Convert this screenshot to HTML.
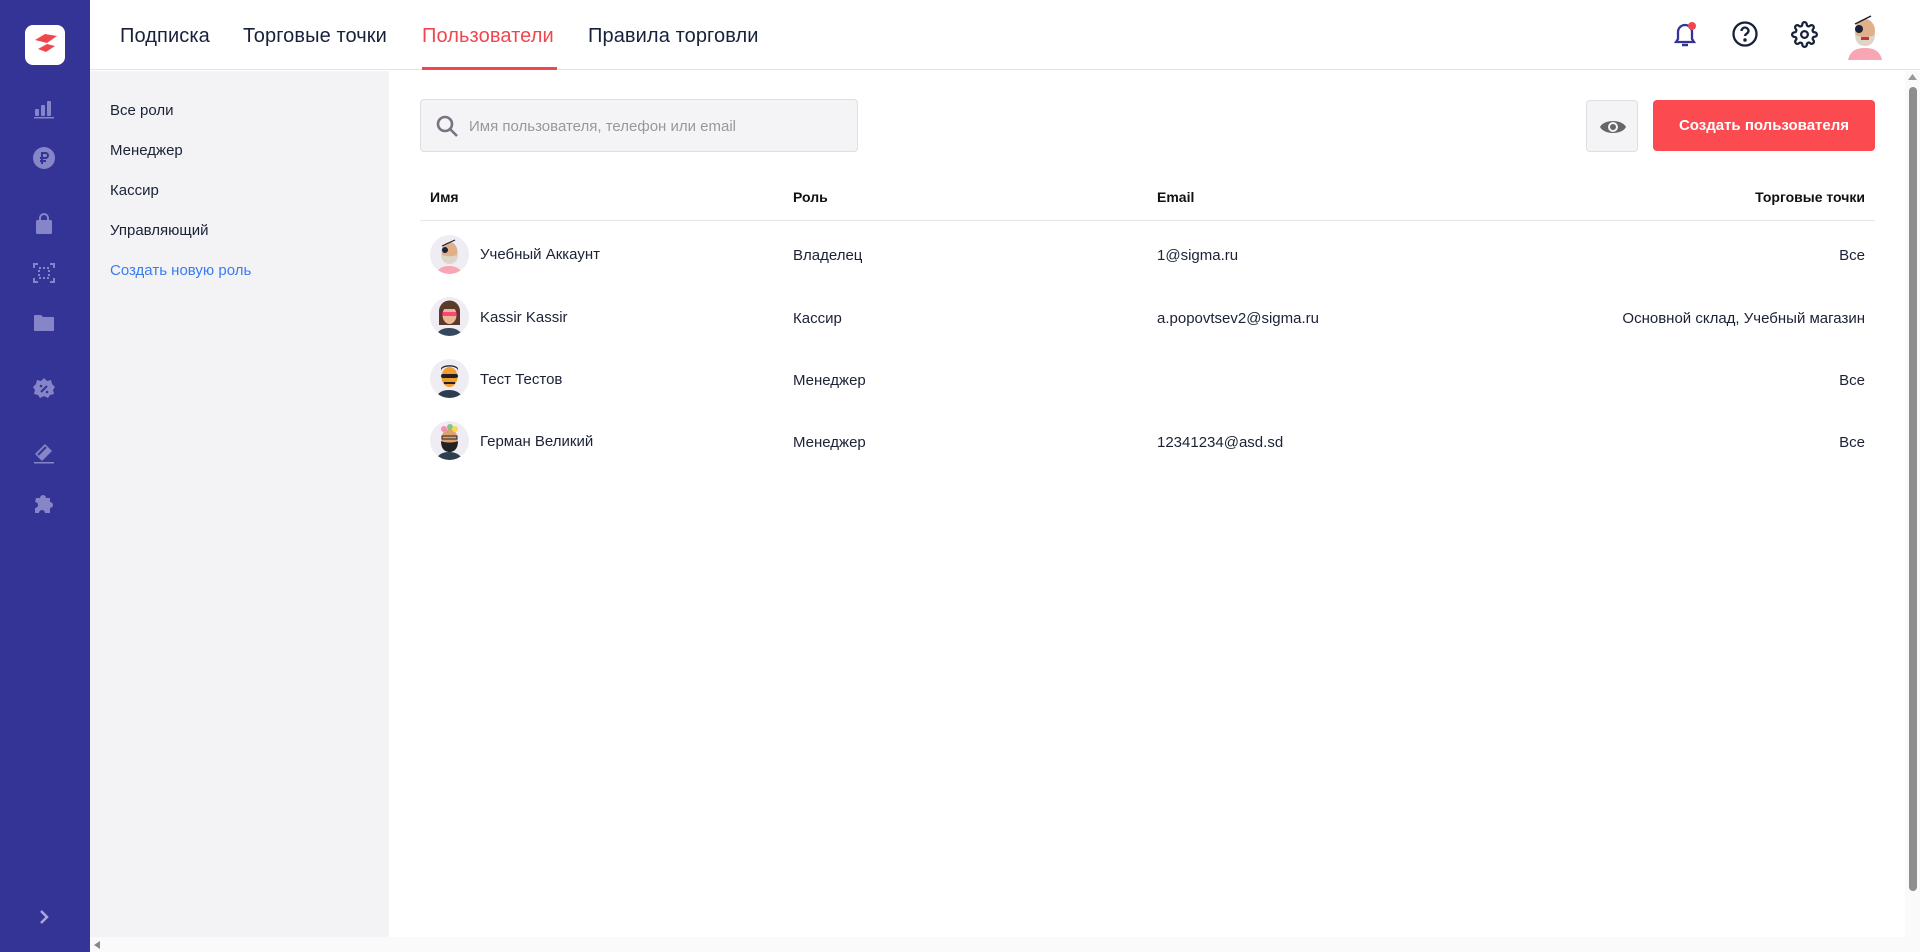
<!DOCTYPE html>
<html><head><meta charset="utf-8"><style>
*{box-sizing:border-box;margin:0;padding:0}
body{width:1920px;height:952px;overflow:hidden;font-family:"Liberation Sans","DejaVu Sans",sans-serif;color:#1b2235;background:#fff;position:relative}
.side{position:absolute;left:0;top:0;width:90px;height:952px;background:#343396}
.logo{position:absolute;left:25px;top:25px;width:40px;height:40px;background:#fff;border-radius:8px}
.ic{position:absolute;left:32px;width:24px;height:24px}
.hdr{position:absolute;left:90px;top:0;right:0;height:70px;border-bottom:1px solid #e3e3e6;background:#fff}
.nav{position:absolute;top:25px;font-size:20px;font-weight:500;color:#18213a;letter-spacing:.1px}
.nav.act{color:#f0474f}
.ul{position:absolute;left:422px;top:67px;width:135px;height:3px;background:#f0474f}
.lp{position:absolute;left:90px;top:71px;width:299px;height:866px;background:#f3f3f6}
.lp div{position:absolute;left:20px;font-size:15px;color:#1b2235}
.search{position:absolute;left:420px;top:99px;width:438px;height:53px;background:#f4f4f6;border:1px solid #dedee3;border-radius:4px}
.search span{position:absolute;left:48px;top:18px;font-size:15px;color:#9a96a0}
.eye{position:absolute;left:1586px;top:100px;width:52px;height:52px;background:#f4f4f6;border:1px solid #dedee3;border-radius:4px}
.btn{position:absolute;left:1653px;top:100px;width:222px;height:51px;background:#fb4a50;border-radius:4px;color:#fff;font-weight:bold;font-size:15px;text-align:center;line-height:51px}
.th{position:absolute;top:189px;font-size:14px;font-weight:bold;color:#111}
.line{position:absolute;left:420px;top:220px;width:1455px;height:1px;background:#e6e6e9}
.c{position:absolute;font-size:15px;color:#1b2235}
.av{position:absolute;left:430px;width:39px;height:39px;border-radius:50%;background:#efedf3;overflow:hidden}
.vs{position:absolute;left:1905px;top:71px;width:15px;height:866px;background:#fafafa}
.vs i{position:absolute;left:4px;top:16px;width:8px;height:804px;border-radius:4px;background:#8e8e8e}
.hs{position:absolute;left:90px;top:937px;width:1830px;height:15px;background:#fafafa}
</style></head><body>
<div class="side">
 <div class="logo"><svg width="40" height="40" viewBox="0 0 40 40"><path d="M10 15 L20 9 L32 11 L22 18 Z" fill="#f0474f"/><path d="M13 24 L22 19 L30 21 L21 27 Z" fill="#f0474f"/></svg></div>
 <svg class="ic" style="top:96px" viewBox="0 0 24 24" fill="#8685c8"><rect x="3" y="13" width="4" height="7" rx="1"/><rect x="9" y="9" width="4" height="11" rx="1"/><rect x="15" y="5" width="4" height="15" rx="1"/><rect x="2" y="21" width="20" height="1.5"/></svg>
 <svg class="ic" style="top:146px" viewBox="0 0 24 24"><circle cx="12" cy="12" r="11" fill="#8685c8"/><path d="M10 18V7h3.5a2.5 2.5 0 010 5H8M8 15h6" stroke="#343396" stroke-width="2" fill="none"/></svg>
 <svg class="ic" style="top:212px" viewBox="0 0 24 24" fill="#8685c8"><rect x="4" y="8" width="16" height="14" rx="1.5"/><path d="M8 9V6a4 4 0 018 0v3" stroke="#8685c8" stroke-width="2" fill="none"/></svg>
 <svg class="ic" style="top:261px" viewBox="0 0 24 24" fill="none" stroke="#8685c8" stroke-width="2"><path d="M2 7V3h4M18 3h4v4M22 17v4h-4M6 21H2v-4"/><rect x="7" y="7" width="10" height="10" stroke-dasharray="2 2"/></svg>
 <svg class="ic" style="top:311px" viewBox="0 0 24 24" fill="#8685c8"><path d="M2 5a1 1 0 011-1h6l2 2h10a1 1 0 011 1v12a1 1 0 01-1 1H3a1 1 0 01-1-1z"/></svg>
 <svg class="ic" style="top:377px" viewBox="0 0 24 24"><path d="M12 1l3 3 4-1 1 4 3 3-2 3 1 4-4 1-2 3-4-2-4 2-2-3-4-1 1-4-2-3 3-3 1-4 4 1z" fill="#8685c8"/><path d="M9 15l6-6" stroke="#343396" stroke-width="2"/><circle cx="9" cy="9" r="1.3" fill="#343396"/><circle cx="15" cy="15" r="1.3" fill="#343396"/></svg>
 <svg class="ic" style="top:441px" viewBox="0 0 24 24" fill="#8685c8"><path d="M3 13L13 3l7 7-10 10z"/><path d="M6 14l8-8" stroke="#343396" stroke-width="2"/><rect x="2" y="21" width="20" height="1.5"/></svg>
 <svg class="ic" style="top:491px" viewBox="0 0 24 24" fill="#8685c8"><path d="M4 7h4a3 3 0 016 0h4v4a3 3 0 010 6v5h-5a3 3 0 00-6 0H3v-5a3 3 0 000-6z"/></svg>
 <svg class="ic" style="top:905px" viewBox="0 0 24 24" fill="none" stroke="#a9a8db" stroke-width="2.5"><path d="M9 6l6 6-6 6"/></svg>
</div>
<div class="hdr"></div>
<div class="nav" style="left:120px">Подписка</div>
<div class="nav" style="left:243px">Торговые точки</div>
<div class="nav act" style="left:422px">Пользователи</div>
<div class="nav" style="left:588px">Правила торговли</div>
<div class="ul"></div>
<svg style="position:absolute;left:1671px;top:20px" width="28" height="30" viewBox="0 0 28 30" fill="none" stroke="#343396" stroke-width="2.3"><path d="M5 22h18l-2-3V12a7 7 0 00-14 0v7z"/><path d="M11 25h6" stroke-width="2.5"/><circle cx="21" cy="6" r="4" fill="#f0474f" stroke="none"/></svg>
<svg style="position:absolute;left:1731px;top:20px" width="28" height="28" viewBox="0 0 28 28" fill="none" stroke="#18213a" stroke-width="2.3"><circle cx="14" cy="14" r="11.5"/><path d="M10.5 11a3.5 3.5 0 117 0c0 2.5-3.5 2.8-3.5 5"/><circle cx="14" cy="20" r=".6" fill="#18213a"/></svg>
<svg style="position:absolute;left:1791px;top:21px" width="27" height="27" viewBox="0 0 24 24" fill="none" stroke="#18213a" stroke-width="2"><circle cx="12" cy="12" r="3"/><path d="M19.4 15a1.65 1.65 0 00.33 1.82l.06.06a2 2 0 11-2.83 2.830l-.06-.06a1.65 1.65 0 00-1.820-.33 1.65 1.65 0 00-1 1.51V21a2 2 0 11-4 0v-.09A1.65 1.65 0 009 19.4a1.65 1.65 0 00-1.82.33l-.06.06a2 2 0 11-2.83-2.83l.06-.06a1.65 1.65 0 00.33-1.82 1.65 1.65 0 00-1.51-1H3a2 2 0 110-4h.09A1.65 1.65 0 004.6 9a1.65 1.65 0 00-.33-1.82l-.06-.06a2 2 0 112.83-2.83l.06.06a1.65 1.65 0 001.82.33H9a1.65 1.65 0 001-1.51V3a2 2 0 114 0v.09a1.65 1.65 0 001 1.51 1.65 1.65 0 001.82-.33l.06-.06a2 2 0 112.83 2.83l-.06.06a1.65 1.65 0 00-.33 1.82V9a1.65 1.65 0 001.51 1H21a2 2 0 110 4h-.09a1.65 1.65 0 00-1.51 1z"/></svg>
<svg style="position:absolute;left:1846px;top:14px" width="38" height="46" viewBox="0 0 38 46"><path d="M2 46c2-9 8-12 17-12s15 3 17 12z" fill="#f8a5b4"/><ellipse cx="19" cy="17" rx="10" ry="12" fill="#e0b08a"/><path d="M9 20c0 8 4 12 10 12s10-4 10-12c-3 4-17 4-20 0z" fill="#ddd6c8"/><circle cx="13" cy="15" r="4" fill="#18213a"/><path d="M9 10l16-8" stroke="#18213a" stroke-width="1.5"/><rect x="15" y="23" width="8" height="3" fill="#c33"/></svg>

<div class="lp">
 <div style="top:31px">Все роли</div>
 <div style="top:71px">Менеджер</div>
 <div style="top:111px">Кассир</div>
 <div style="top:151px">Управляющий</div>
 <div style="top:191px;color:#3a7cf0;font-weight:500">Создать новую роль</div>
</div>

<div class="search"><svg style="position:absolute;left:14px;top:14px" width="24" height="24" viewBox="0 0 24 24" fill="none" stroke="#7a7280" stroke-width="2.6"><circle cx="10" cy="10" r="7"/><path d="M15 15l7 7"/></svg><span>Имя пользователя, телефон или email</span></div>
<div class="eye"><svg style="position:absolute;left:12px;top:14px" width="28" height="24" viewBox="0 0 28 24"><path d="M1 12C5 4 23 4 27 12 23 20 5 20 1 12z" fill="#666"/><circle cx="14" cy="12" r="5" fill="#f4f4f6"/><circle cx="14" cy="12" r="3" fill="#666"/></svg></div>
<div class="btn">Создать пользователя</div>

<div class="th" style="left:430px">Имя</div>
<div class="th" style="left:793px">Роль</div>
<div class="th" style="left:1157px">Email</div>
<div class="th" style="right:55px">Торговые точки</div>
<div class="line"></div>

<div class="av" style="top:235px"><svg width="39" height="39" viewBox="0 0 39 39"><path d="M6 39c2-6 7-8 13-8s11 2 14 8z" fill="#f8a5b4"/><ellipse cx="19.5" cy="17" rx="8" ry="10" fill="#e0b08a"/><path d="M11 19c0 7 4 10 8.5 10s8.5-3 8.5-10c-3 3-14 3-17 0z" fill="#ddd6c8"/><circle cx="15" cy="15" r="3" fill="#18213a"/><path d="M12 11l13-6" stroke="#18213a" stroke-width="1.2"/></svg></div>
<div class="c" style="left:480px;top:246px">Учебный Аккаунт</div>
<div class="c" style="left:793px;top:247px">Владелец</div>
<div class="c" style="left:1157px;top:247px">1@sigma.ru</div>
<div class="c" style="right:55px;top:247px">Все</div>

<div class="av" style="top:297px"><svg width="39" height="39" viewBox="0 0 39 39"><path d="M6 39c2-6 7-8 13-8s11 2 14 8z" fill="#34495e"/><path d="M9 28V14a10 10 0 0121 0v14z" fill="#5a3a2a"/><ellipse cx="19.5" cy="18" rx="7" ry="9" fill="#e8b795"/><rect x="12" y="15" width="15" height="4" fill="#f06" opacity=".6"/><path d="M12 12h15V9H12z" fill="#5a3a2a"/></svg></div>
<div class="c" style="left:480px;top:309px">Kassir Kassir</div>
<div class="c" style="left:793px;top:310px">Кассир</div>
<div class="c" style="left:1157px;top:310px">a.popovtsev2@sigma.ru</div>
<div class="c" style="right:55px;top:310px">Основной склад, Учебный магазин</div>

<div class="av" style="top:359px"><svg width="39" height="39" viewBox="0 0 39 39"><path d="M6 39c2-6 7-8 13-8s11 2 14 8z" fill="#2c3e50"/><ellipse cx="19.5" cy="18" rx="8" ry="10" fill="#f39c32"/><path d="M11 12c0-6 17-6 17 0v-2c0-5-17-5-17 0z" fill="#222"/><rect x="11" y="15" width="17" height="4" rx="2" fill="#222"/><path d="M14 24h11" stroke="#222" stroke-width="2"/></svg></div>
<div class="c" style="left:480px;top:371px">Тест Тестов</div>
<div class="c" style="left:793px;top:372px">Менеджер</div>
<div class="c" style="right:55px;top:372px">Все</div>

<div class="av" style="top:421px"><svg width="39" height="39" viewBox="0 0 39 39"><path d="M6 39c2-6 7-8 13-8s11 2 14 8z" fill="#2c3e50"/><ellipse cx="19.5" cy="18" rx="8" ry="10" fill="#e0a070"/><path d="M11 20c0 8 4 11 8.5 11s8.5-3 8.5-11c-3 2-14 2-17 0z" fill="#222"/><circle cx="14" cy="8" r="3" fill="#f48fb1"/><circle cx="20" cy="6" r="3" fill="#81c784"/><circle cx="25" cy="8" r="3" fill="#ffd54f"/><rect x="12" y="15" width="15" height="3" fill="none" stroke="#222"/></svg></div>
<div class="c" style="left:480px;top:433px">Герман Великий</div>
<div class="c" style="left:793px;top:434px">Менеджер</div>
<div class="c" style="left:1157px;top:434px">12341234@asd.sd</div>
<div class="c" style="right:55px;top:434px">Все</div>

<div class="vs"><svg style="position:absolute;left:3px;top:3px" width="9" height="6"><path d="M0 6L4.5 0 9 6z" fill="#999"/></svg><i></i></div>
<div class="hs"><svg style="position:absolute;left:4px;top:4px" width="6" height="8"><path d="M6 0L0 4 6 8z" fill="#888"/></svg></div>
</body></html>
